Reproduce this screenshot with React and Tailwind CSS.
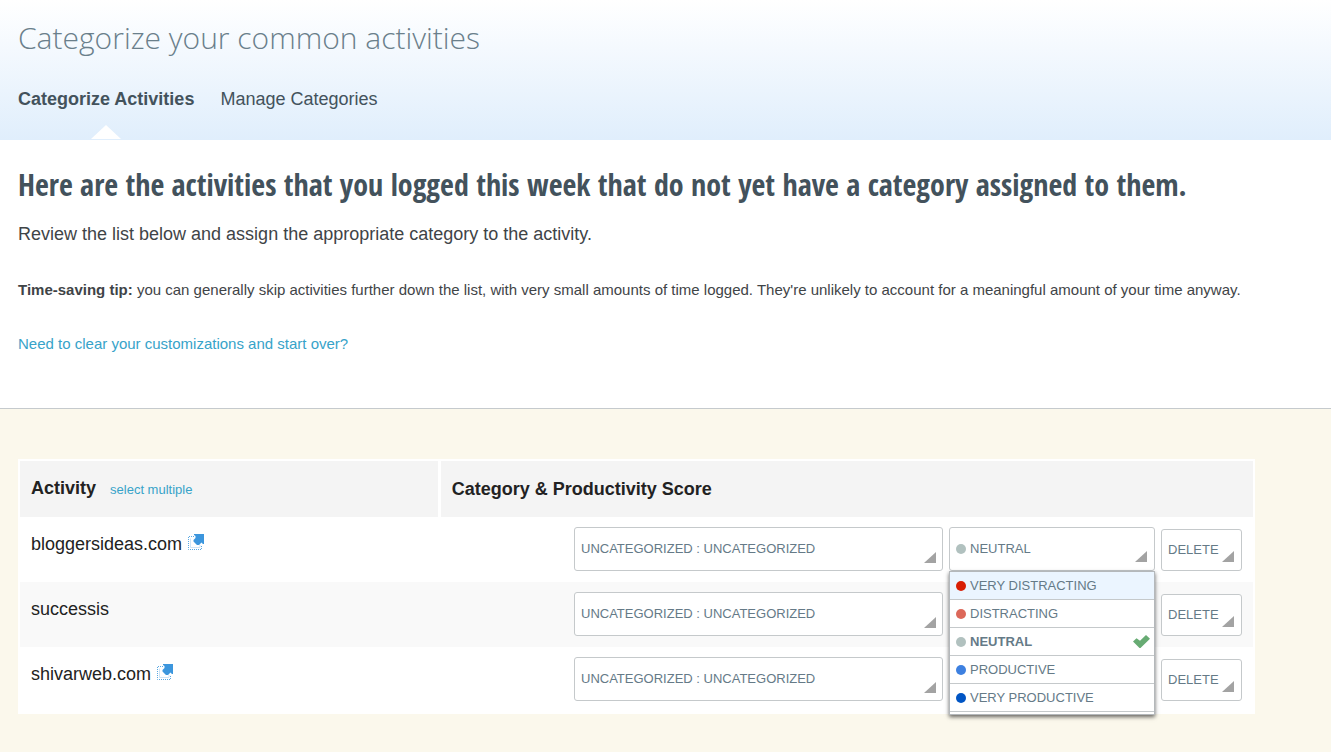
import { useState } from 'react';

const activities = [
  { id: 1, name: 'bloggersideas.com', external: true },
  { id: 2, name: 'successis', external: false },
  { id: 3, name: 'shivarweb.com', external: true }
];

const scores = [
  { key: 'very-distracting', label: 'VERY DISTRACTING', dot: 'bg-[#d81e05]' },
  { key: 'distracting', label: 'DISTRACTING', dot: 'bg-[#dc685a]' },
  { key: 'neutral', label: 'NEUTRAL', dot: 'bg-[#b1c1bf]' },
  { key: 'productive', label: 'PRODUCTIVE', dot: 'bg-[#3d80e0]' },
  { key: 'very-productive', label: 'VERY PRODUCTIVE', dot: 'bg-[#0055c4]' }
];

const Corner = () => (
  <svg
    className="pointer-events-none absolute right-[7px] bottom-2"
    width="12"
    height="11"
    viewBox="0 0 12 11"
    aria-hidden="true"
  >
    <path d="M12 0V11H0Z" fill="#a3a3a3" />
  </svg>
);

const ExternalIcon = () => (
  <svg width="16" height="16" viewBox="0 0 16 16" aria-hidden="true">
    <path d="M2.5 4.5V13.5H12V11" fill="none" stroke="#cfe5f7" strokeWidth="1" />
    <path
      d="M6 2.5H.5V15.5H13.5V11"
      fill="none"
      stroke="#5aa8e2"
      strokeWidth="1"
      strokeDasharray="1 1"
    />
    <path d="M6 0H16V10H15L13.5 8.5L11 11H9L5.5 7.5V6L7.5 4V2L6 1Z" fill="#3c96dd" />
  </svg>
);

const CheckIcon = () => (
  <svg width="17" height="13" viewBox="0 0 17 13" aria-hidden="true">
    <path d="M0 6.5L3.5 3.2L7 5.8L13 0L17 3.8L7.5 13H6.5Z" fill="#67ab73" />
  </svg>
);

const ScorePicker = ({ name, open, onToggle }) => {
  const [value, setValue] = useState('neutral');
  const current = scores.find((score) => score.key === value);

  const handleSelect = (key) => {
    setValue(key);
    onToggle();
  };

  return (
    <div className="relative w-[206px]">
      <button
        type="button"
        onClick={onToggle}
        aria-haspopup="listbox"
        aria-expanded={open}
        aria-label={`Productivity score for ${name}`}
        className="relative flex h-11 w-full items-center rounded-[3px] border border-[#c5c9cb] bg-white px-1.5 text-left"
      >
        <span className={`mr-1 size-[10px] rounded-full ${current.dot}`} />
        {current.label}
        <Corner />
      </button>
      {open && (
        <ul
          role="listbox"
          aria-label="Productivity score"
          className="absolute inset-x-0 top-11 z-10 border border-[#b4b8bb] bg-white pb-0.5 shadow-[0_2px_4px_rgba(0,0,0,0.6)]"
        >
          {scores.map((score, index) => (
            <li
              key={score.key}
              role="option"
              aria-selected={score.key === value}
              onClick={() => handleSelect(score.key)}
              className={`flex h-7 cursor-pointer items-center border-b border-[#c5c9cb] pr-1 pl-1.5 ${
                index === 0 ? 'bg-[#ebf5ff]' : ''
              } ${score.key === value ? 'font-bold' : ''}`}
            >
              <span className={`mr-1 size-[10px] rounded-full ${score.dot}`} />
              <span className="flex-1">{score.label}</span>
              {score.key === value && <CheckIcon />}
            </li>
          ))}
        </ul>
      )}
    </div>
  );
};

const App = () => {
  const [openRow, setOpenRow] = useState(1);

  return (
    <div className="flex min-h-screen flex-col bg-white font-['Liberation_Sans',Arial,sans-serif] text-[#3f4447]">
      <header className="bg-linear-to-b from-white to-[#e0eefc] px-[18px] pt-4">
        <h1 className="font-['Open_Sans',sans-serif] text-[30px] leading-[44px] font-light text-[#6a7f8b]">
          Categorize your common activities
        </h1>
        <nav className="mt-6 flex gap-[26px] text-lg leading-[30px] text-[#43525c]">
          <a href="#categorize" className="flex flex-col items-center font-bold">
            Categorize Activities
            <svg className="mt-[11px] mb-px block" width="30" height="14" viewBox="0 0 30 14" aria-hidden="true">
              <path d="M15 0L30 14H0Z" fill="#fff" />
            </svg>
          </a>
          <a href="#manage">Manage Categories</a>
        </nav>
      </header>

      <section className="border-b border-[#c5cacd] px-[18px] pt-6 pb-[52px]">
        <h2 className="font-['Open_Sans_Condensed','Liberation_Sans_Narrow','Open_Sans',sans-serif] text-[30px] leading-[42px] font-bold text-[#43525c]">
          Here are the activities that you logged this week that do not yet have a category assigned to them.
        </h2>
        <p className="mt-3.5 text-lg leading-7">
          Review the list below and assign the appropriate category to the activity.
        </p>
        <p className="mt-[30px] text-[15px] leading-6">
          <strong>Time-saving tip:</strong> you can generally skip activities further down the list, with very
          small amounts of time logged. They're unlikely to account for a meaningful amount of your time anyway.
        </p>
        <a href="#reset" className="mt-[30px] block text-[15px] leading-6 text-[#37a3c9]">
          Need to clear your customizations and start over?
        </a>
      </section>

      <main className="flex-1 bg-[#fbf8ec] pt-[50px] pr-[76px] pb-9 pl-[18px]">
        <div className="bg-white p-0.5">
          <table className="w-full text-left text-[#222]">
            <thead className="bg-[#f4f4f4] text-lg leading-7">
              <tr className="h-14">
                <th className="w-[34%] px-[11px]">
                  <span className="mr-3.5">Activity</span>
                  <button type="button" className="cursor-pointer text-[13px] font-normal text-[#37a3c9]">
                    select multiple
                  </button>
                </th>
                <th className="border-l-[3px] border-white px-[11px]">Category &amp; Productivity Score</th>
              </tr>
            </thead>
            <tbody>
              {activities.map((activity) => (
                <tr key={activity.id} className="even:bg-[#f9f9f9]">
                  <td className="px-[11px] pt-[13px] align-top text-lg leading-7">
                    <div className="flex gap-1.5">
                      {activity.name}
                      {activity.external && (
                        <a href={`#${activity.name}`} aria-label={`Open ${activity.name}`} className="pt-1">
                          <ExternalIcon />
                        </a>
                      )}
                    </div>
                  </td>
                  <td className="px-[11px] pt-2.5 pb-[11px]">
                    <div className="flex items-end justify-end gap-1.5 text-[13px] leading-5 text-[#657a87]">
                      <div className="relative w-[369px]">
                        <select
                          aria-label={`Category for ${activity.name}`}
                          className="block h-11 w-full appearance-none rounded-[3px] border border-[#c5c9cb] bg-white px-1.5"
                        >
                          <option>UNCATEGORIZED : UNCATEGORIZED</option>
                        </select>
                        <Corner />
                      </div>
                      <ScorePicker
                        name={activity.name}
                        open={openRow === activity.id}
                        onToggle={() => setOpenRow(openRow === activity.id ? null : activity.id)}
                      />
                      <button
                        type="button"
                        className="relative h-[42px] w-[81px] cursor-pointer rounded-[3px] border border-[#c5c9cb] bg-white px-1.5 text-left"
                      >
                        DELETE
                        <Corner />
                      </button>
                    </div>
                  </td>
                </tr>
              ))}
            </tbody>
          </table>
        </div>
      </main>
    </div>
  );
};

export default App;
